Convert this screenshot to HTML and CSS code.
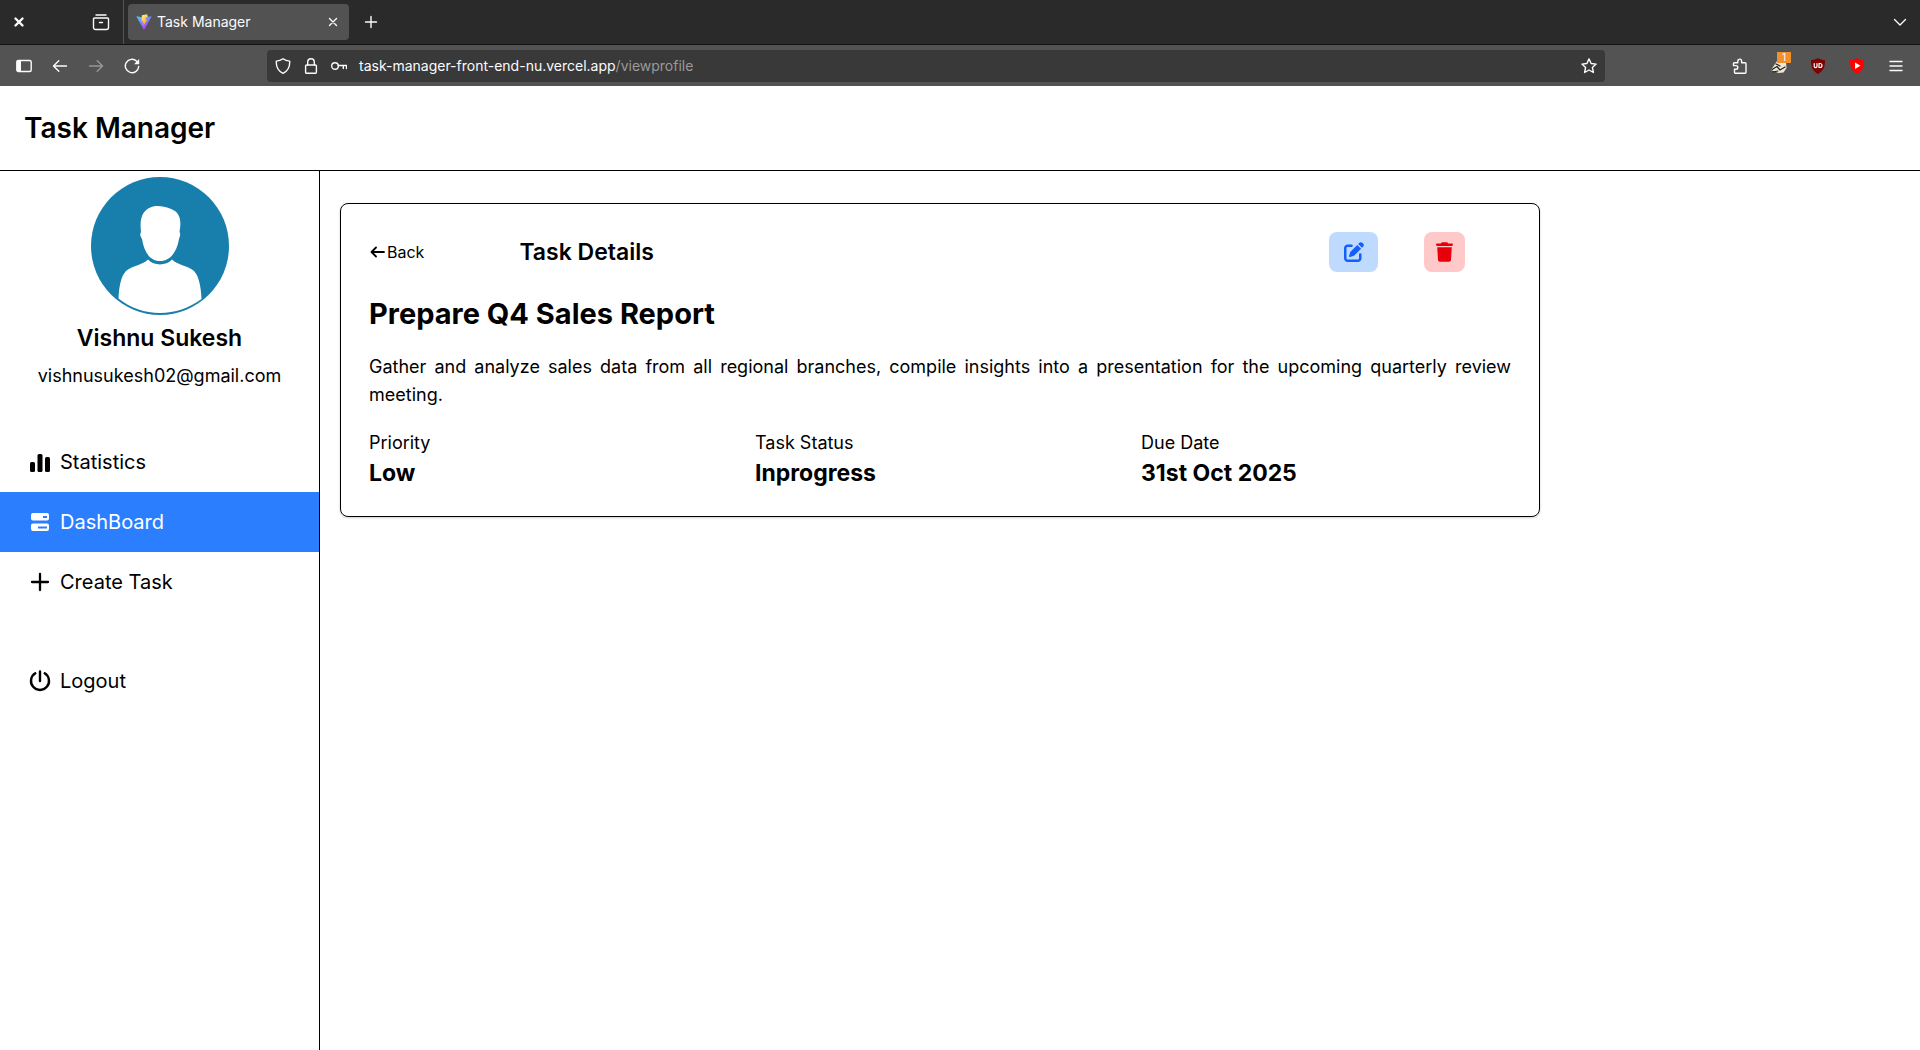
FILE: index.html
```html
<!DOCTYPE html>
<html lang="en">
<head>
<meta charset="utf-8">
<meta name="viewport" content="width=device-width, initial-scale=1">
<title>Task Manager</title>
<link rel="stylesheet" href="styles.css">
</head>
<body>
<div class="browser">
  <div class="tabstrip">
    <div class="window-controls">
      <button class="chrome-btn" aria-label="Close window"><svg width="16" height="16" viewBox="0 0 16 16"><path d="M4.5 4.5l7 7M11.5 4.500l-7 7" stroke-width="2.400"/></svg></button>
      <button class="chrome-btn" aria-label="Recent browsing"><svg width="18" height="18" viewBox="0 0 18 18"><path d="M4 2h10M2.500 5h13a1 1 0 0 1 1 1v8.500a2 2 0 0 1-2 2h-11a2 2 0 0 1-2-2V6a1 1 0 0 1 1-1zM7.500 9.500h3"/></svg></button>
    </div>
    <div class="tab">
      <svg class="favicon" width="16" height="16" viewBox="0 0 16 16">
        <defs>
          <linearGradient id="blue" x1="0" y1="0" x2=".6" y2="1"><stop offset="0" stop-color="#41d1ff"/><stop offset="1" stop-color="#bd34fe"/></linearGradient>
          <linearGradient id="gold" x1=".3" y1="0" x2=".6" y2="1"><stop offset="0" stop-color="#ffea83"/><stop offset="1" stop-color="#ffa800"/></linearGradient>
        </defs>
        <path fill="url(#blue)" d="M.3 2.300l7.200 1.300 8.200-1.300-7.400 13.300a.4.4 0 0 1-.7 0z"/>
        <path fill="url(#gold)" d="M11.200.2L5.900 1.200l-.5 6.200 1.700-.3-.5 2.100 1.300-.3-.6 3.200 3.900-6.700-1.900.4.500-2.200 2-.5z"/>
      </svg>
      <span class="tab-title">Task Manager</span>
      <button class="chrome-btn" aria-label="Close tab"><svg width="16" height="16" viewBox="0 0 16 16"><path d="M4.500 4.500l7 7M11.500 4.500l-7 7"/></svg></button>
    </div>
    <button class="chrome-btn new-tab" aria-label="New tab"><svg width="16" height="16" viewBox="0 0 16 16"><path d="M8 2.500v11M2.500 8h11"/></svg></button>
    <button class="chrome-btn all-tabs" aria-label="List all tabs"><svg width="16" height="16" viewBox="0 0 16 16"><path d="M2.500 5.500L8 11l5.500-5.500"/></svg></button>
  </div>
  <div class="toolbar">
    <div class="nav-buttons">
      <button class="chrome-btn" aria-label="Sidebar"><svg width="16" height="16" viewBox="0 0 16 16"><rect x=".8" y="2.500" width="14.400" height="11" rx="1.500"/><path d="M1 3h4v10H1z" fill="#fbfbfe" stroke="none"/></svg></button>
      <button class="chrome-btn" aria-label="Back"><svg width="16" height="16" viewBox="0 0 16 16"><path d="M14.500 8H1.500M6.800 2.800L1.500 8l5.300 5.200"/></svg></button>
      <button class="chrome-btn" aria-label="Forward" disabled><svg width="16" height="16" viewBox="0 0 16 16"><path d="M1.500 8h13M9.200 2.800L14.500 8l-5.300 5.200"/></svg></button>
      <button class="chrome-btn" aria-label="Reload"><svg width="16" height="16" viewBox="0 0 16 16"><path d="M14.700 8.500A6.700 6.700 0 1 1 12.700 3.200L14.300 5"/><path d="M15.200 1v5.200H10z" fill="#fbfbfe" stroke="none"/></svg></button>
    </div>
    <div class="urlbar">
      <svg width="16" height="16" viewBox="0 0 16 16"><path d="M8 .7c2 1.500 4 2.200 6.700 2.400.3 5.500-1.700 9.700-6.700 12.200C3 12.800 1 8.600 1.300 3.100 4 2.900 6 2.200 8 .7z"/></svg>
      <svg width="16" height="16" viewBox="0 0 16 16"><rect x="2.600" y="7" width="10.800" height="8.300" rx="1"/><path d="M4.700 7V4a3.300 3.300 0 0 1 6.600 0v3"/></svg>
      <svg width="16" height="16" viewBox="0 0 16 16"><circle cx="4" cy="8" r="3.300"/><path d="M7.300 7.500h8.200v3M12.300 7.500v3"/></svg>
      <div class="url" role="textbox" aria-label="Address">task-manager-front-end-nu.vercel.app<span class="url-path">/viewprofile</span></div>
      <button class="chrome-btn" aria-label="Bookmark"><svg width="16" height="16" viewBox="0 0 16 16"><path d="M8 .9l2.100 4.600 5 .6-3.700 3.400 1 5-4.400-2.500-4.400 2.500 1-5L.9 6.100l5-.6z"/></svg></button>
    </div>
    <div class="extensions">
      <button class="chrome-btn" aria-label="Extensions"><svg width="16" height="16" viewBox="0 0 16 16"><path d="M2.500 14.200v-3H4a1.800 1.800 0 0 0 0-3.600H1.500V5.800a1 1 0 0 1 1-1h3.300V3a1.900 1.900 0 0 1 3.800 0v1.800h3.400a1 1 0 0 1 1 1v8.500a1 1 0 0 1-1 1H3.500a1 1 0 0 1-1-1z"/></svg></button>
      <button class="chrome-btn badge-host" aria-label="Cookie extension"><svg width="16" height="16" viewBox="0 0 16 16"><path d="M0 12L6 3l9 1 .5 6-3 4.500-5 .5z" fill="#efe6d3" stroke="none"/><path d="M1 11.500l5-3 3 3.500 5-3M5 6l4 2M2 14l5-1" stroke="#222" stroke-width="1.200"/></svg><span class="badge">1</span></button>
      <button class="chrome-btn" aria-label="uBlock Origin"><svg width="16" height="16" viewBox="0 0 16 16"><path d="M8 0c2.300 1.400 4.500 2 7 2 0 6.500-1 10.500-7 14C2 12.500 1 8.500 1 2c2.500 0 4.700-.6 7-2z" fill="#800000" stroke="none"/><path d="M4.200 5.500v2.700a1.400 1.400 0 0 0 2.800 0V5.500M9 5.500v4h1a2 2 0 0 0 0-4z" stroke="#fff" stroke-width="1.200"/></svg></button>
      <button class="chrome-btn" aria-label="Video extension"><svg width="16" height="16" viewBox="0 0 16 16"><path d="M8 0c2.300 1.400 4.500 2 7 2 0 6.500-1 10.500-7 14C2 12.500 1 8.500 1 2c2.500 0 4.700-.6 7-2z" fill="#f00" stroke="none"/><path d="M6 4.500L11.500 7.700 6 11z" fill="#fff" stroke="none"/></svg></button>
      <button class="chrome-btn" aria-label="Menu"><svg width="16" height="16" viewBox="0 0 16 16"><path d="M2 3.500h12M2 8h12M2 12.500h12"/></svg></button>
    </div>
  </div>
</div>

<header class="site-header"><h1>Task Manager</h1></header>

<div class="layout">
  <aside class="sidebar">
    <svg class="avatar" viewBox="0 0 138 138" role="img" aria-label="Profile picture">
      <circle cx="69" cy="69" r="69" fill="#187eac"/>
      <path fill="#fff" d="M50 55c-2-16 3-23 12-25.500 9-1.500 16 1.500 22 4.500 5 4 6.500 10 4.500 21 1.500 2 .3 5-.5 7-2 12-8 22-19 22S53 74 51 62c-1.500-2-2.500-5-1-7z"/>
      <path fill="#fff" d="M57 82.500c6 6.500 18 6.500 24 0 6 6 16 6 22 11.500 5 5 7 16 7.500 28C98 131 84 136 69 136s-30-5-41.500-14.500C28 110 30 99 35 94c6-5.500 16-5.500 22-11.500z"/>
    </svg>
    <h2 class="user-name">Vishnu Sukesh</h2>
    <p class="user-email">vishnusukesh02@gmail.com</p>
    <nav class="menu">
      <a class="menu-item" href="#statistics"><svg width="24" height="24" viewBox="0 0 24 24" fill="currentColor"><rect x="2" y="12" width="5" height="10" rx="1.500"/><rect x="9.500" y="4" width="5" height="18" rx="1.500"/><rect x="17" y="7" width="5" height="15" rx="1.500"/></svg>Statistics</a>
      <a class="menu-item active" href="#dashboard" aria-current="page"><svg width="24" height="24" viewBox="0 0 24 24" fill="currentColor" fill-rule="evenodd"><path d="M5 3h14a2 2 0 0 1 2 2v3.500a2 2 0 0 1-2 2H5a2 2 0 0 1-2-2V5a2 2 0 0 1 2-2zm10 3v2h4V6zM5 13.500h14a2 2 0 0 1 2 2V19a2 2 0 0 1-2 2H5a2 2 0 0 1-2-2v-3.500a2 2 0 0 1 2-2zm5 3v2h9v-2z"/></svg>DashBoard</a>
      <a class="menu-item" href="#create"><svg width="24" height="24" viewBox="0 0 24 24" fill="none" stroke="currentColor" stroke-width="2.300" stroke-linecap="round"><path d="M12 4v16M4 12h16"/></svg>Create Task</a>
    </nav>
    <button class="menu-item logout"><svg width="24" height="24" viewBox="0 0 24 24" fill="none" stroke="currentColor" stroke-width="2.400" stroke-linecap="round"><path d="M12 2.500V12M7.300 4.300a9 9 0 1 0 9.400 0"/></svg>Logout</button>
  </aside>

  <main class="content">
    <article class="card">
      <div class="card-head">
        <a class="back" href="#dashboard"><svg width="18" height="18" viewBox="0 0 18 18" fill="none" stroke="currentColor" stroke-width="1.800" stroke-linecap="round" stroke-linejoin="round"><path d="M15 9H2.500M7 4.500L2.500 9 7 13.500"/></svg>Back</a>
        <h2 class="card-label">Task Details</h2>
        <div class="actions">
          <button class="action edit" aria-label="Edit task"><svg width="20" height="20" viewBox="0 0 512 512" fill="currentColor"><path d="M471.600 21.700c-21.900-21.900-57.300-21.900-79.200 0L362.300 51.700l97.900 97.900 30.100-30.100c21.900-21.900 21.900-57.300 0-79.200L471.600 21.700zm-299.200 220c-6.100 6.100-10.800 13.600-13.500 21.900l-29.600 88.800c-2.900 8.600-.6 18.100 5.800 24.600s15.900 8.700 24.600 5.800l88.800-29.600c8.200-2.700 15.700-7.400 21.900-13.500L437.700 172.300 339.700 74.300 172.400 241.700zM96 64C43 64 0 107 0 160V416c0 53 43 96 96 96H352c53 0 96-43 96-96V320c0-17.700-14.300-32-32-32s-32 14.300-32 32v96c0 17.700-14.300 32-32 32H96c-17.700 0-32-14.300-32-32V160c0-17.700 14.300-32 32-32h96c17.700 0 32-14.300 32-32s-14.300-32-32-32H96z"/></svg></button>
          <button class="action delete" aria-label="Delete task"><svg width="17" height="20" viewBox="0 0 448 512" fill="currentColor"><path d="M135.200 17.700L128 32H32C14.300 32 0 46.300 0 64S14.300 96 32 96H416c17.700 0 32-14.300 32-32s-14.300-32-32-32H320l-7.200-14.300C307.400 6.800 296.300 0 284.200 0H163.800c-12.100 0-23.200 6.800-28.600 17.700zM416 128H32L53.200 467c1.600 25.300 22.600 45 47.900 45H346.900c25.300 0 46.300-19.700 47.900-45L416 128z"/></svg></button>
        </div>
      </div>
      <h3 class="task-title">Prepare Q4 Sales Report</h3>
      <p class="task-text">Gather and analyze sales data from all regional branches, compile insights into a presentation for the upcoming quarterly review meeting.</p>
      <dl class="facts">
        <div><dt>Priority</dt><dd>Low</dd></div>
        <div><dt>Task Status</dt><dd>Inprogress</dd></div>
        <div><dt>Due Date</dt><dd>31st Oct 2025</dd></div>
      </dl>
    </article>
  </main>
</div>
</body>
</html>
```

FILE: styles.css
```css
* { box-sizing: border-box; margin: 0; padding: 0; }

body {
  min-height: 100vh;
  display: flex;
  flex-direction: column;
  background: #fff;
  color: #000;
  font: 16px/24px Inter, "Liberation Sans", sans-serif;
}

button { border: 0; background: none; color: inherit; font: inherit; cursor: pointer; }
a { color: inherit; text-decoration: none; }
svg { display: block; flex: none; }

/* Browser frame */
.browser { color: #fbfbfe; font-size: 14px; line-height: 20px; }
.browser svg { fill: none; stroke: #fbfbfe; stroke-width: 1.4; stroke-linecap: round; stroke-linejoin: round; }
.browser .favicon { stroke: none; }

.tabstrip {
  display: flex;
  align-items: center;
  height: 45px;
  background: #2a2a2a;
  border-bottom: 1px solid #111;
}
.window-controls {
  display: flex;
  align-items: center;
  justify-content: space-between;
  width: 124px;
  height: 100%;
  padding: 0 13px 0 11px;
  border-right: 1px solid #555;
}
.tab {
  display: flex;
  align-items: center;
  gap: 5px;
  width: 221px;
  height: 36px;
  margin-left: 4px;
  padding: 0 8px;
  border-radius: 4px;
  background: #525252;
}
.tab-title { flex: 1; }
.new-tab { margin-left: 14px; }
.all-tabs { margin-left: auto; margin-right: 12px; }

.toolbar {
  display: flex;
  align-items: center;
  height: 41px;
  padding: 0 16px;
  background: #535353;
}
.nav-buttons { display: flex; gap: 20px; width: 251px; }
.nav-buttons button:disabled { opacity: .4; }
.urlbar {
  display: flex;
  align-items: center;
  flex: 1;
  gap: 12px;
  height: 32px;
  padding: 0 8px;
  border-radius: 4px;
  background: #393939;
}
.url { flex: 1; white-space: nowrap; }
.url-path { color: #9a9a9a; }
.extensions { display: flex; justify-content: flex-end; gap: 23px; width: 299px; }
.badge-host { position: relative; }
.badge {
  position: absolute;
  top: -6px;
  right: -4px;
  width: 14px;
  height: 11px;
  background: #f0912b;
  font-size: 10px;
  line-height: 11px;
  text-align: center;
}

/* Application */
.site-header { padding: 24px; border-bottom: 1px solid #000; }
.site-header h1 { font-size: 28px; line-height: 36px; font-weight: 600; }

.layout { display: flex; flex: 1; }

.sidebar {
  display: flex;
  flex-direction: column;
  width: 16.6667%;
  padding-top: 6px;
  border-right: 1px solid #000;
  text-align: center;
}
.avatar { width: 138px; height: 138px; margin: 0 auto 7px; }
.user-name { font-size: 23px; line-height: 32px; font-weight: 600; }
.user-email { margin: 8px 0 42px; font-size: 18px; line-height: 28px; }

.menu-item {
  display: flex;
  align-items: center;
  gap: 8px;
  width: 100%;
  height: 60px;
  padding: 0 28px;
  font-size: 20px;
  line-height: 28px;
}
.menu-item.active { background: #2b7fff; color: #fff; }
.logout { margin-top: 39px; }

.content { flex: 1; padding: 32px 20px; }
.card {
  max-width: 1200px;
  padding: 28px 28px 27px;
  border: 1px solid #000;
  border-radius: 8px;
  box-shadow: 0 1px 3px rgb(0 0 0 / 10%), 0 1px 2px rgb(0 0 0 / 10%);
}
.card-head { display: flex; align-items: center; }
.back { display: flex; align-items: center; }
.card-label { margin-left: 95px; font-size: 23px; line-height: 32px; font-weight: 600; }
.actions { display: flex; gap: 46px; margin: 0 46px 0 auto; }
.action {
  display: flex;
  align-items: center;
  justify-content: center;
  height: 40px;
  border-radius: 8px;
}
.edit { width: 49px; background: #bedbff; color: #155dfc; }
.delete { width: 41px; background: #ffc9c9; color: #e7000b; }

.task-title { margin-top: 24px; font-size: 29px; line-height: 36px; font-weight: 700; }
.task-text { margin-top: 21px; font-size: 18px; line-height: 28px; text-align: justify; }
.facts {
  display: grid;
  grid-template-columns: repeat(3, 1fr);
  gap: 16px;
  margin-top: 20px;
}
.facts dt { font-size: 18px; line-height: 28px; }
.facts dd { font-size: 23px; line-height: 32px; font-weight: 700; }
```
